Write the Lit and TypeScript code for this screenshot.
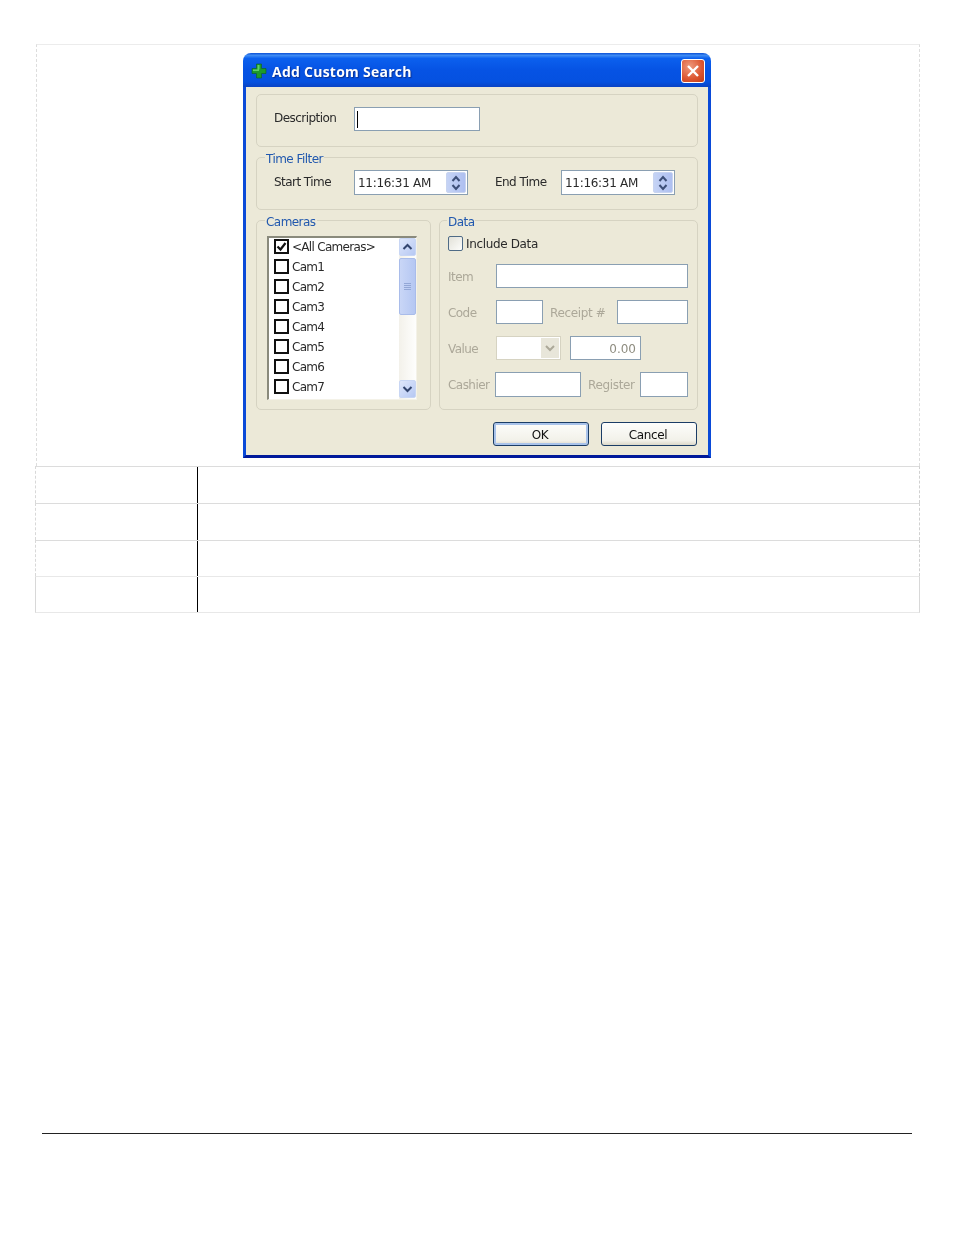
import { LitElement, html, css, svg } from "lit";
import { customElement } from "lit/decorators.js";

const cams = ["Cam1", "Cam2", "Cam3", "Cam4", "Cam5", "Cam6", "Cam7"];

@customElement("app-root")
export class AppRoot extends LitElement {
  static styles = css`
    :host { display: block; width: 954px; height: 1235px; box-sizing: border-box; padding: 44px 35px 0 36px; background: #fff; position: relative; font-family: "DejaVu Sans", sans-serif; }
    * { box-sizing: border-box; }
    .sheet { width: 884px; }
    .top { height: 422px; padding: 8px 0 0 206px; border-top: 1px solid #ececec; border-left: 1px dashed #ddd; border-right: 1px dashed #ddd; }
    .row { display: flex; height: 37px; border-top: 1px solid #dcdcdc; border-left: 1px dashed #d8d8d8; border-right: 1px dashed #d0d0d0; margin-left: -1px; }
    .row.short { height: 36px; }
    .row.last { border-top-color: #e8e8e8; border-bottom: 1px solid #e8e8e8; height: 37px; border-left: 1px solid #d8d8d8; border-right: 1px solid #d8d8d8; }
    .cell-a { width: 162px; border-right: 1px solid #000; }
    .footer { height: 1px; background: #222; position: absolute; left: 42px; top: 1133px; width: 870px; }

    .dialog { width: 468px; height: 405px; display: flex; flex-direction: column; filter: blur(0.45px); font-size: 12px; letter-spacing: -0.55px; color: #2a2a2a; }
    .title { height: 34px; flex: none; display: flex; align-items: center; border-radius: 8px 8px 0 0; padding: 2px 6px 0 8px; color: #fff; background: linear-gradient(#0a4fd6 0, #3f8cf3 7%, #0b60ee 16%, #0653e4 50%, #0551e0 85%, #0a43c4 100%); }
    .plus { width: 16px; height: 16px; margin-right: 5px; }
    .title-text { flex: 1; font-family: "Open Sans", sans-serif; font-weight: 700; font-size: 14px; letter-spacing: 0.25px; text-shadow: 1px 1px 1px #0a2f90; padding-top: 1px; }
    .close { width: 24px; height: 24px; border: 1px solid #fff; border-radius: 3px; background: radial-gradient(circle at 35% 30%, #ee9a7e, #dc5530 60%, #c23c15); display: flex; align-items: center; justify-content: center; }
    .client { flex: 1; display: flex; flex-direction: column; gap: 10px; background: #ece9d8; border: 3px solid #0a4ad8; border-top: 0; border-bottom-color: #00199a; padding: 7px 10px 0; }
    .group { position: relative; border: 1px solid #d6d3c2; border-radius: 5px; }
    .legend { position: absolute; top: -6px; left: 8px; padding: 0 1px; background: #ece9d8; color: #2158ae; line-height: 14px; }
    .data .legend { left: 7px; }
    .g1 { height: 53px; padding: 12px 0 0 17px; display: flex; }
    .g2 { height: 53px; padding: 12px 0 0 17px; display: flex; }
    .lab-a { width: 80px; line-height: 23px; }
    .g2 .lab-a { line-height: 24px; }
    .lab-b { width: 66px; margin-left: 27px; line-height: 24px; }
    .input { background: #fff; border: 1px solid #8a9fb2; height: 24px; display: flex; align-items: center; }
    .desc { width: 126px; padding-left: 2px; }
    .caret { width: 1px; height: 17px; background: #000; }
    .time { width: 114px; height: 25px; padding: 0 1px 0 3px; justify-content: space-between; letter-spacing: -0.3px; }
    .time > span { padding-top: 1px; }
    .spin { width: 20px; height: 21px; display: flex; flex-direction: column; align-items: center; justify-content: center; background: linear-gradient(90deg, #c5d3f5, #aebff0); border: 1px solid #c8d4f0; border-radius: 2px; }
    .spin svg { width: 12px; height: 9px; display: block; }
    .columns { display: flex; gap: 8px; height: 190px; }
    .cameras { width: 175px; padding: 15px 0 0 10px; }
    .list { width: 150px; height: 164px; display: flex; background: #fff; border-style: solid; border-width: 2px 1px 1px 2px; border-color: #8a8a7c #f4f2e8 #f4f2e8 #8a8a7c; }
    .items { width: 130px; padding-left: 5px; margin-top: -1px; flex: none; letter-spacing: -0.7px; }
    .item { height: 20px; display: flex; align-items: center; gap: 3px; }
    .box { width: 15px; height: 15px; margin-bottom: 1px; border: 2px solid #111; background: #fff; flex: none; display: flex; align-items: center; justify-content: center; }
    .box svg { width: 11px; height: 11px; display: block; }
    .bar { width: 18px; display: flex; flex-direction: column; background: linear-gradient(90deg, #f3f1ea, #fefefd); padding: 0 0 1px 0; }
    .btn { height: 18px; flex: none; background: linear-gradient(135deg, #dfe7fb, #b6c8f3); border: 1px solid #c8d6f4; border-radius: 2px; display: flex; align-items: center; justify-content: center; }
    .btn svg { width: 13px; height: 10px; }
    .thumb { height: 57px; margin-top: 2px; background: linear-gradient(90deg, #c9d6f6, #b5c7f2); border: 1px solid #a9bcea; border-radius: 2px; display: flex; flex-direction: column; align-items: center; justify-content: center; gap: 1px; }
    .thumb i { display: block; width: 7px; height: 1px; background: #93a7d6; }
    .track { flex: 1; }
    .data { flex: 1; padding: 15px 0 0 8px; display: flex; flex-direction: column; gap: 12px; }
    .check { height: 15px; margin-bottom: 1px; display: flex; align-items: center; gap: 3px; letter-spacing: -0.35px; }
    .check-box { width: 15px; height: 15px; border: 1px solid #4f6b86; border-radius: 2px; background: linear-gradient(135deg, #e2e1d8, #fdfdfb); }
    .line { display: flex; height: 24px; align-items: center; }
    .line > span { padding-top: 2px; }
    .off { color: #aca899; }
    .w48 { width: 48px; flex: none; }
    .w47 { width: 47px; flex: none; }
    .i192 { width: 192px; }
    .i47 { width: 47px; }
    .i71 { width: 71px; }
    .i86 { width: 86px; height: 25px; }
    .i48 { width: 48px; height: 25px; }
    .receipt { margin-left: 7px; width: 67px; flex: none; letter-spacing: -0.35px; }
    .register { margin-left: 7px; width: 52px; flex: none; letter-spacing: -0.35px; }
    .select { width: 65px; height: 24px; border: 1px solid #d6d3c2; background: #fff; display: flex; justify-content: flex-end; padding: 1px; margin-right: 9px; }
    .drop { width: 18px; background: #e8e6da; display: flex; align-items: center; justify-content: center; }
    .drop svg { width: 12px; height: 10px; }
    .num { justify-content: flex-end; padding: 1px 4px 0 0; color: #8f8d80; letter-spacing: 0; }
    .actions { display: flex; justify-content: flex-end; gap: 12px; margin-top: 2px; padding-right: 1px; letter-spacing: -0.35px; }
    .push { width: 96px; height: 24px; padding: 2px 2px 0 0; border: 1px solid #1b3d66; border-radius: 3px; background: linear-gradient(#fdfdfb, #f2f1e9 80%, #dcd8c8); display: flex; align-items: center; justify-content: center; color: #111; }
    .default { box-shadow: inset 0 0 0 2px #a9c3ea; }
  `;

  render() {
    return html`
      <div class="sheet">
        <div class="top">
          <div class="dialog">
            <div class="title">
              <svg class="plus" viewBox="0 0 16 16"><path d="M5.500 1h5v4.500H15v5h-4.500V15h-5v-4.500H1v-5h4.500z" fill="#1c9a2a" stroke="#0d5f1c" stroke-width="0.6"/><path d="M6.500 2h2v4.500h-2zM2 6.500h6v1.500H2z" fill="#5fd068"/></svg>
              <span class="title-text">Add Custom Search</span>
              <div class="close"><svg width="16" height="16" viewBox="0 0 16 16"><path d="M3 3 L13 13 M13 3 L3 13" stroke="#fff" stroke-width="2.400"/></svg></div>
            </div>
            <div class="client">
              <div class="group g1">
                <span class="lab-a">Description</span>
                <div class="input desc"><div class="caret"></div></div>
              </div>
              <div class="group g2">
                <span class="legend">Time Filter</span>
                <span class="lab-a">Start Time</span>
                <div class="input time"><span>11:16:31 AM</span>${this.spin()}</div>
                <span class="lab-b">End Time</span>
                <div class="input time"><span>11:16:31 AM</span>${this.spin()}</div>
              </div>
              <div class="columns">
                <div class="group cameras">
                  <span class="legend">Cameras</span>
                  <div class="list">
                    <div class="items">
                      <div class="item"><div class="box"><svg viewBox="0 0 11 11"><path d="M1.500 5.500 L4.500 8.500 L9.500 2" fill="none" stroke="#111" stroke-width="2.200"/></svg></div><span>&lt;All Cameras&gt;</span></div>
                      ${cams.map((c) => html`<div class="item"><div class="box"></div><span>${c}</span></div>`)}
                    </div>
                    <div class="bar">
                      <div class="btn"><svg viewBox="0 0 12 10"><path d="M2 7 L6 3 L10 7" fill="none" stroke="#33456e" stroke-width="2"/></svg></div>
                      <div class="thumb"><i></i><i></i><i></i><i></i></div>
                      <div class="track"></div>
                      <div class="btn"><svg viewBox="0 0 12 10"><path d="M2 3 L6 7 L10 3" fill="none" stroke="#33456e" stroke-width="2"/></svg></div>
                    </div>
                  </div>
                </div>
                <div class="group data">
                  <span class="legend">Data</span>
                  <div class="check"><div class="check-box"></div><span>Include Data</span></div>
                  <div class="line off"><span class="w48">Item</span><div class="input i192"></div></div>
                  <div class="line off"><span class="w48">Code</span><div class="input i47"></div><span class="receipt">Receipt #</span><div class="input i71"></div></div>
                  <div class="line off"><span class="w48">Value</span><div class="select"><div class="drop"><svg viewBox="0 0 12 10"><path d="M2 3 L6 7 L10 3" fill="none" stroke="#aca899" stroke-width="2"/></svg></div></div><div class="input i71 num">0.00</div></div>
                  <div class="line off"><span class="w47">Cashier</span><div class="input i86"></div><span class="register">Register</span><div class="input i48"></div></div>
                </div>
              </div>
              <div class="actions">
                <div class="push default">OK</div>
                <div class="push">Cancel</div>
              </div>
            </div>
          </div>
        </div>
        <div class="row"><div class="cell-a"></div></div>
        <div class="row"><div class="cell-a"></div></div>
        <div class="row short"><div class="cell-a"></div></div>
        <div class="row last"><div class="cell-a"></div></div>
      </div>
      <div class="footer"></div>
    `;
  }

  spin() {
    return html`<div class="spin"><svg viewBox="0 0 12 9">${svg`<path d="M2.500 7 L6 3 L9.500 7" fill="none" stroke="#3d4f78" stroke-width="2"/>`}</svg><svg viewBox="0 0 12 9">${svg`<path d="M2.500 2 L6 6 L9.500 2" fill="none" stroke="#3d4f78" stroke-width="2"/>`}</svg></div>`;
  }
}
